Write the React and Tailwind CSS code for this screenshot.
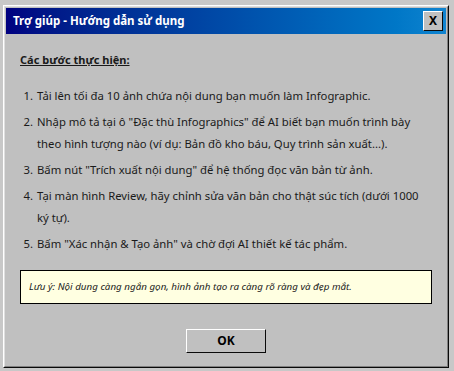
import React from 'react';

const steps = [
  'Tải lên tối đa 10 ảnh chứa nội dung bạn muốn làm Infographic.',
  'Nhập mô tả tại ô "Đặc thù Infographics" để AI biết bạn muốn trình bày theo hình tượng nào (ví dụ: Bản đồ kho báu, Quy trình sản xuất...).',
  'Bấm nút "Trích xuất nội dung" để hệ thống đọc văn bản từ ảnh.',
  'Tại màn hình Review, hãy chỉnh sửa văn bản cho thật súc tích (dưới 1000 ký tự).',
  'Bấm "Xác nhận & Tạo ảnh" và chờ đợi AI thiết kế tác phẩm.',
];

const App = () => {
  return (
    <div
      className="w-[454px] h-[371px] bg-[#c8c8c8] overflow-hidden pt-[5px] pl-[3px]"
      style={{ fontFamily: '"Noto Sans", "Open Sans", sans-serif' }}
    >
      <div className="w-[446px] h-[363px] bg-[#c0c0c0] border border-white border-r-[#0a0a0a] border-b-[#0a0a0a] flex flex-col">
        <div className="border border-[#dfdfdf] border-r-[#808080] border-b-[#808080] flex-1 flex flex-col p-[1px]">
          {/* thanh tiêu đề */}
          <div className="h-[26px] flex items-center justify-between pl-[7px] pr-[3px] bg-gradient-to-r from-[#000080] to-[#1084d0]">
            <span className="text-white font-bold text-[11.5px] leading-none">Trợ giúp - Hướng dẫn sử dụng</span>
            <button className="w-[20px] h-[20px] bg-[#c0c0c0] border border-white border-r-[#0a0a0a] border-b-[#0a0a0a] flex items-center justify-center text-[12px] font-bold text-black leading-none">
              X
            </button>
          </div>

          {/* nội dung */}
          <div className="flex-1 flex flex-col px-[14px] pt-[18px] text-[#1a1a1a]">
            <h2 className="text-[11px] font-bold underline leading-[16px]">Các bước thực hiện:</h2>
            <ol className="list-decimal pl-[16px] mt-[17px] text-[11.3px] leading-[22px]">
              {steps.map((s, i) => (
                <li key={i} className="mb-[4px] pl-[1px]">{s}</li>
              ))}
            </ol>
            <div className="mt-[11px] h-[34px] bg-[#ffffe1] border border-black flex items-center px-[8px]">
              <span className="italic text-[9.8px]">Lưu ý: Nội dung càng ngắn gọn, hình ảnh tạo ra càng rõ ràng và đẹp mắt.</span>
            </div>
            <div className="flex justify-center mt-[25px]">
              <button className="w-[80px] h-[24px] bg-[#c0c0c0] border border-white border-r-[#0a0a0a] border-b-[#0a0a0a] text-[12px] font-bold text-black">
                OK
              </button>
            </div>
          </div>
        </div>
      </div>
    </div>
  );
};

export default App;
